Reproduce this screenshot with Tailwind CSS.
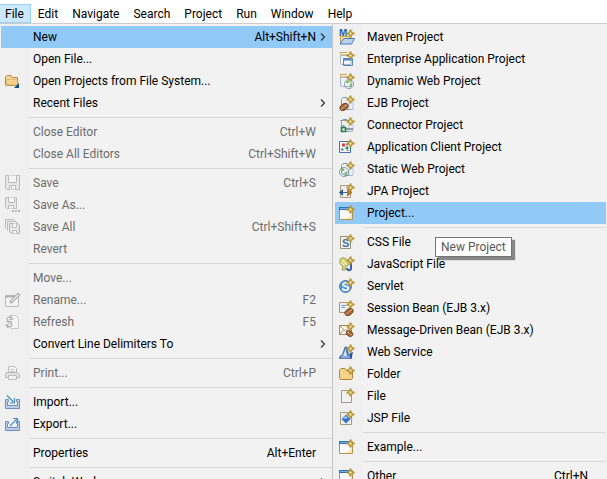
<!DOCTYPE html>
<html lang="en">

<head>
    <meta charset="UTF-8">
    <meta name="viewport" content="width=device-width, initial-scale=1.0">
    <title>File menu</title>
    <script src="https://cdn.jsdelivr.net/npm/@tailwindcss/browser@4"></script>
</head>

<body class="flex h-screen flex-col overflow-hidden bg-white font-[Roboto,'Noto_Sans',sans-serif] text-[12px] leading-4 text-black">

    <!-- icon set, all on a 16x16 grid -->
    <svg class="hidden">
        <defs>
            <linearGradient id="gold" x1="0" y1="0" x2="0" y2="1">
                <stop offset="0" stop-color="#fff3cf" />
                <stop offset="1" stop-color="#f3c566" />
            </linearGradient>
            <linearGradient id="page" x1="0" y1="0" x2="1" y2="1">
                <stop offset="0" stop-color="#ffffff" />
                <stop offset="1" stop-color="#cfe0f5" />
            </linearGradient>
            <linearGradient id="steel" x1="0" y1="0" x2="1" y2="1">
                <stop offset="0" stop-color="#c9dcf2" />
                <stop offset="1" stop-color="#7fa5d2" />
            </linearGradient>
            <radialGradient id="globe" cx=".35" cy=".3" r=".8">
                <stop offset="0" stop-color="#e8f6ff" />
                <stop offset=".5" stop-color="#5a9bd0" />
                <stop offset="1" stop-color="#1d4f8f" />
            </radialGradient>

            <symbol id="spark" viewBox="0 0 16 16">
                <path d="M11 1H12V3H13V4H15V5H13V6H12V8H11V6H10V5H8V4H10V3H11Z" fill="#fffbe0" stroke="#b8942f" stroke-width="1.200" />
            </symbol>
            <symbol id="bean" viewBox="0 0 16 16">
                <ellipse cx="5" cy="12" rx="4.6" ry="3.1" transform="rotate(-35 5 12)" fill="#a5673a" stroke="#6b3a1c" stroke-width=".8" />
                <path d="M1.8 14.2C4.5 13.5 4.5 11 8 9.8" fill="none" stroke="#e2b58c" />
            </symbol>
            <symbol id="ball" viewBox="0 0 16 16">
                <circle cx="5" cy="11" r="4.6" fill="url(#globe)" stroke="#4672a6" stroke-width=".6" />
                <path d="M1.5 9C3 6.5 5 7 5.5 8S4 10.500 3 10.500ZM5.500 11.500L8.500 10L8 13.500L5.500 14.800Z" fill="#7dbb6c" />
            </symbol>
            <symbol id="bluefolder" viewBox="0 0 16 16">
                <path d="M2.500 12.500V4.500L4 2.500H8L9 4.500H12.500V14.500H7L2.500 12.500Z" fill="url(#steel)" stroke="#7b98bd" />
                <path d="M10 6H14V14.500H10Z" fill="#eaf2fb" stroke="#8fa9c9" stroke-width=".6" />
            </symbol>

            <symbol id="i-open" viewBox="0 0 16 16">
                <path d="M.5 12V4L2 2.500H6L7.500 4.500H12.500V7L13 12.500H1.500Z" fill="#f3d28c" stroke="#b98a48" />
                <path d="M1.500 6.500H12.500V12H1.500Z" fill="url(#gold)" stroke="#d5a75c" stroke-width=".6" />
                <path d="M14 10V15H9Z" fill="#0b4f93" />
            </symbol>
            <symbol id="i-save" viewBox="0 0 16 16">
                <path d="M.5 .5H14.500V14.500H2L.5 13Z" fill="#e8e8e8" stroke="#bcbcbc" />
                <path d="M3.500 .5V7.500H11.500V.5M4.500 14.500V10.500H10.500V14.500M6.500 11.500V14" fill="#f4f4f4" stroke="#bcbcbc" />
            </symbol>
            <symbol id="i-saveas" viewBox="0 0 16 16">
                <path d="M.5 .5H11.500V11.500H2L.5 10Z" fill="#e8e8e8" stroke="#bcbcbc" />
                <path d="M3.500 .5V5.500H9.500V.5M3.500 11.500V8.500H8.500V11.500" fill="#f4f4f4" stroke="#bcbcbc" />
                <path d="M7 13H9V15H7ZM10 13H12V15H10ZM13 13H15V15H13Z" fill="#b4b4b4" />
            </symbol>
            <symbol id="i-saveall" viewBox="0 0 16 16">
                <path d="M.5 9.500V.5H8.500L10.500 2.500M2.500 11.500V2.500H10.500L12.500 4.500" fill="#ececec" stroke="#bcbcbc" />
                <path d="M4.500 4.500H12.500L14.500 6.500V14.500H6.500L4.500 12.500Z" fill="#e8e8e8" stroke="#b4b4b4" />
                <path d="M7.500 4.500V8.500H11.500V4.500M7.500 14.500V11.500H11.500V14.500" fill="#f4f4f4" stroke="#bcbcbc" />
            </symbol>
            <symbol id="i-rename" viewBox="0 0 16 16">
                <path d="M.5 3.500H13.500V14.500H.5Z" fill="#f3f3f3" stroke="#bcbcbc" />
                <path d="M.5 4.500H10" stroke="#b0b0b0" stroke-width="2" />
                <path d="M5 11L6 8L13 1L15 3L8 10Z" fill="#dcdcdc" stroke="#a4a4a4" />
            </symbol>
            <symbol id="i-refresh" viewBox="0 0 16 16">
                <path d="M5 1.500H10.500L13.500 4.500V14.500H6" fill="#f4f4f4" stroke="#c8c8c8" />
                <path d="M7 4.500C4 1.500 1 4 2.500 6.500S7 6.500 6.500 9M1 11C4 14.500 8 12.500 6.500 9.500S2.500 9 2 7M5 2L7.500 5L4 6M3 14L1 11L4.500 10" fill="none" stroke="#b0b0b0" stroke-width="1.200" />
            </symbol>
            <symbol id="i-print" viewBox="0 0 16 16">
                <path d="M3.500 8V1.500H9.500L11.500 3.500V8" fill="#f5f5f5" stroke="#bcbcbc" />
                <path d="M5 4.500H9M5 6.500H10" stroke="#c4c4c4" />
                <path d="M1.500 7.500H12.500L14.500 9.500V12.500H.5V9.500Z" fill="#e2e2e2" stroke="#b8b8b8" />
                <path d="M3.500 10.500H11.500V14.500H3.500Z" fill="#f0f0f0" stroke="#bcbcbc" />
            </symbol>
            <symbol id="i-import" viewBox="0 0 16 16">
                <path d="M3.500 5.500H.5V14.500H14.500V5.500H11.500V7.500H12.500V11.500H2.500V7.500H3.500Z" fill="#bccde8" stroke="#6f8fbe" />
                <path d="M2 1.500L8.500 8M9.500 4V9H4.500" fill="none" stroke="#4a90bf" stroke-width="1.200" />
            </symbol>
            <symbol id="i-export" viewBox="0 0 16 16">
                <path d="M3.500 5.500H.5V14.500H14.500V5.500H11.500V7.500H12.500V11.500H2.500V7.500H3.500Z" fill="#bccde8" stroke="#6f8fbe" />
                <path d="M5 10L12 3M8 2.500H12.500V7" fill="none" stroke="#4a90bf" stroke-width="1.200" />
            </symbol>

            <symbol id="i-maven" viewBox="0 0 16 16">
                <path d="M1.500 14V7.500H12V10" fill="#fbe7a6" stroke="#c9a24d" />
                <path d="M1 15L4.500 9.500H15.500L12.500 15Z" fill="#b9d5f3" stroke="#4776ba" />
                <text x="0" y="7" font-family="Liberation Sans" font-size="10" font-weight="bold" fill="#2a5c9c">M</text>
                <use href="#spark" />
            </symbol>
            <symbol id="i-ear" viewBox="0 0 16 16">
                <path d="M1.500 4.500H12V13.500H3Q1.500 13.500 1.500 12Z" fill="#f3f6fa" stroke="#a8b6c9" />
                <path d="M1.500 3.500V1.500H8" fill="none" stroke="#c9a24d" />
                <path d="M1 3.500H9" stroke="#e5c983" />
                <path d="M4.500 7.500H13.500V14.500H4.500Z" fill="url(#page)" stroke="#5d84b3" />
                <path d="M4 8.500H14" stroke="#4d86c6" stroke-width="2" />
                <use href="#spark" />
            </symbol>
            <symbol id="i-web" viewBox="0 0 16 16">
                <path d="M1.500 4.500H12V13.500H3Q1.500 13.500 1.500 12Z" fill="#f0f4fa" stroke="#a8b6c9" />
                <path d="M1.500 3.500V1.500H8" fill="none" stroke="#c9a24d" />
                <path d="M1 3.500H9" stroke="#e5c983" />
                <use href="#ball" x="5" />
                <use href="#spark" />
            </symbol>
            <symbol id="i-ejb" viewBox="0 0 16 16">
                <use href="#bluefolder" />
                <use href="#bean" />
                <use href="#spark" />
            </symbol>
            <symbol id="i-connector" viewBox="0 0 16 16">
                <use href="#bluefolder" />
                <path d="M1 3.500H8" stroke="#9a9a9a" />
                <path d="M4.500 8V12H14" fill="none" stroke="#8a98a8" stroke-width="2" />
                <path d="M2.500 10.500H6.500V14.500H2.500Z" fill="#d8f0dd" stroke="#2a8048" stroke-width="1.600" />
                <use href="#spark" />
            </symbol>
            <symbol id="i-client" viewBox="0 0 16 16">
                <path d="M.5 2.500H11.500V13.500H.5Z" fill="#f7fafd" stroke="#4573ad" />
                <path d="M3 4.500H6V7.500H3Z" fill="#d5413c" />
                <path d="M8 7L10 9L8 11L6 9Z" fill="#2f9a4a" />
                <path d="M2.500 9L5 10.500L2.500 12Z" fill="#2c62b0" />
                <path d="M7 5H9V6.500H7ZM8 11H10V12H8Z" fill="#b06bb5" />
                <use href="#spark" />
            </symbol>
            <symbol id="i-static" viewBox="0 0 16 16">
                <use href="#bluefolder" />
                <use href="#ball" />
                <use href="#spark" />
            </symbol>
            <symbol id="i-jpa" viewBox="0 0 16 16">
                <path d="M1.500 2.500H11.500V14.500H1.500Z" fill="url(#page)" stroke="#a99b7c" />
                <path d="M3 9.500H10" stroke="#3a6ea5" />
                <path d="M0 9.500L4 6V13Z" fill="#26558f" />
                <path d="M13 9.500L8.500 6V13Z" fill="#c47b2b" stroke="#8d5418" stroke-width=".6" />
                <use href="#spark" />
            </symbol>
            <symbol id="i-window" viewBox="0 0 16 16">
                <path d="M.5 2.500H13.500V14.500H.5Z" fill="#f8fbff" stroke="#b09355" />
                <path d="M13 7V14H5C9 13 11.500 11 13 7Z" fill="#fbe6ac" />
                <path d="M0 3.500H11" stroke="#2d73b5" stroke-width="3" />
                <path d="M1 3.500H11" stroke="#6fb4e8" />
                <use href="#spark" />
            </symbol>
            <symbol id="i-css" viewBox="0 0 16 16">
                <path d="M1.500 2.500H11.500V14.500H1.500Z" fill="url(#page)" stroke="#9a9378" />
                <text x="3" y="13" font-family="Liberation Sans" font-size="11" font-weight="bold" fill="#3f74b0">S</text>
                <use href="#spark" />
            </symbol>
            <symbol id="i-js" viewBox="0 0 16 16">
                <path d="M1 3Q4 0 7 3L10 5V9L7 10L6 14H3L4 10L1 8Z" fill="#d9d67c" stroke="#8f8f52" stroke-width=".8" />
                <path d="M3 4L8 9M2 7L5 9" stroke="#fbfad0" />
                <path d="M12 7V12.500Q12 14.300 10 14.300Q8 14.300 8 12" fill="none" stroke="#3b62a5" stroke-width="2" />
                <use href="#spark" />
            </symbol>
            <symbol id="i-servlet" viewBox="0 0 16 16">
                <circle cx="6.500" cy="8.500" r="6" fill="#5b97cf" stroke="#4a7fb5" />
                <text x="2.500" y="13" font-family="Liberation Sans" font-size="12" font-weight="bold" fill="#ffffff">S</text>
                <use href="#spark" />
            </symbol>
            <symbol id="i-session" viewBox="0 0 16 16">
                <path d="M.5 2.500H11.500V12.500H.5Z" fill="url(#page)" stroke="#a99b6c" />
                <path d="M2.500 5.500H7M2.500 7.500H6" stroke="#6a97cf" />
                <use href="#bean" x="5" />
                <use href="#spark" />
            </symbol>
            <symbol id="i-message" viewBox="0 0 16 16">
                <path d="M.5 3.500H12.500V12.500H.5Z" fill="#fffaf0" stroke="#a5875c" />
                <path d="M.5 3.500L6.500 9L12 4M.5 12.500L4.500 8" fill="none" stroke="#a5875c" />
                <ellipse cx="10.500" cy="11.500" rx="3.600" ry="2.600" transform="rotate(35 10.500 11.500)" fill="#a5673a" stroke="#6b3a1c" stroke-width=".8" />
                <path d="M8 10C10 10 10.500 13 13 13" fill="none" stroke="#e2b58c" />
                <use href="#spark" />
            </symbol>
            <symbol id="i-service" viewBox="0 0 16 16">
                <path d="M0 14.500L1.500 11.500H3L6 3H8L10 11.500H11.500L13 14.500Z" fill="#5580c4" stroke="#34589a" stroke-width=".6" />
                <path d="M4 12L6.500 5L8 12Z" fill="#d6e6f8" />
                <path d="M10 13L11 9L14 8L12.500 14.500Z" fill="#2e5594" />
                <path d="M2 13H11" stroke="#c2d6f2" />
                <use href="#spark" />
            </symbol>
            <symbol id="i-folder" viewBox="0 0 16 16">
                <path d="M.5 12V4L2 2.500H6L7.500 4.500H13.500V12L12.500 13.500H1.500Z" fill="#f3d28c" stroke="#b88534" />
                <path d="M1 6H13V12.500H1Z" fill="url(#gold)" />
                <use href="#spark" />
            </symbol>
            <symbol id="i-file" viewBox="0 0 16 16">
                <path d="M2.500 2.500H12.500V14.500H2.500Z" fill="url(#page)" stroke="#a39c84" />
                <use href="#spark" />
            </symbol>
            <symbol id="i-jsp" viewBox="0 0 16 16">
                <path d="M1.500 2.500H12.500V14.500H1.500Z" fill="url(#page)" stroke="#a39c84" />
                <path d="M7 4.500L11.500 9L7 13.500L2.500 9Z" fill="#2f70c8" />
                <path d="M7 5L9 8L7 9L3.500 9Z" fill="#86b8ee" />
                <use href="#spark" />
            </symbol>
            <symbol id="i-arrow" viewBox="0 0 6 8">
                <path d="M1 .5L4.500 4L1 7.500" fill="none" stroke="#333333" stroke-width="1.200" />
            </symbol>
        </defs>
    </svg>

    <nav class="flex shrink-0 border-b border-[#cccccc] pt-1">
        <button class="h-[19px] border border-l-0 border-[#99d1ff] bg-[#cce8ff] pr-1.5 pl-[5px]">File</button>
        <button class="h-[19px] px-[7px]">Edit</button>
        <button class="h-[19px] px-[7px]">Navigate</button>
        <button class="h-[19px] px-[7px]">Search</button>
        <button class="h-[19px] px-[7px]">Project</button>
        <button class="h-[19px] px-[7px]">Run</button>
        <button class="h-[19px] px-[7px]">Window</button>
        <button class="h-[19px] px-[7px]">Help</button>
    </nav>

    <main class="flex min-h-0 flex-1">
        <!-- File menu -->
        <div class="w-[332px] shrink-0 bg-[linear-gradient(to_right,#f0f0f0_29px,#f2f2f2_29px)] pt-0.5 pl-px">
            <button class="flex h-[22px] w-full items-center gap-3 bg-[#91c9f7] pr-1.5 pl-1"><span class="w-4"></span><span>New</span><span class="ml-auto -mr-2">Alt+Shift+N</span><svg class="h-2 w-1.5"><use href="#i-arrow" /></svg></button>
            <button class="flex h-[22px] w-full items-center gap-3 pr-4 pl-1"><span class="w-4"></span><span>Open File...</span></button>
            <button class="flex h-[22px] w-full items-center gap-3 pr-4 pl-1"><svg class="size-4"><use href="#i-open" /></svg><span>Open Projects from File System...</span></button>
            <button class="flex h-[22px] w-full items-center gap-3 pr-1.5 pl-1"><span class="w-4"></span><span>Recent Files</span><svg class="ml-auto h-2 w-1.5"><use href="#i-arrow" /></svg></button>
            <hr class="my-[3px] ml-7 border-[#d7d7d7]">
            <button class="flex h-[22px] w-full items-center gap-3 pr-4 pl-1 text-[#6d6d6d]"><span class="w-4"></span><span>Close Editor</span><span class="ml-auto">Ctrl+W</span></button>
            <button class="flex h-[22px] w-full items-center gap-3 pr-4 pl-1 text-[#6d6d6d]"><span class="w-4"></span><span>Close All Editors</span><span class="ml-auto">Ctrl+Shift+W</span></button>
            <hr class="my-[3px] ml-7 border-[#d7d7d7]">
            <button class="flex h-[22px] w-full items-center gap-3 pr-4 pl-1 text-[#6d6d6d]"><svg class="size-4"><use href="#i-save" /></svg><span>Save</span><span class="ml-auto">Ctrl+S</span></button>
            <button class="flex h-[22px] w-full items-center gap-3 pr-4 pl-1 text-[#6d6d6d]"><svg class="size-4"><use href="#i-saveas" /></svg><span>Save As...</span></button>
            <button class="flex h-[22px] w-full items-center gap-3 pr-4 pl-1 text-[#6d6d6d]"><svg class="size-4"><use href="#i-saveall" /></svg><span>Save All</span><span class="ml-auto">Ctrl+Shift+S</span></button>
            <button class="flex h-[22px] w-full items-center gap-3 pr-4 pl-1 text-[#6d6d6d]"><span class="w-4"></span><span>Revert</span></button>
            <hr class="my-[3px] ml-7 border-[#d7d7d7]">
            <button class="flex h-[22px] w-full items-center gap-3 pr-4 pl-1 text-[#6d6d6d]"><span class="w-4"></span><span>Move...</span></button>
            <button class="flex h-[22px] w-full items-center gap-3 pr-4 pl-1 text-[#6d6d6d]"><svg class="size-4"><use href="#i-rename" /></svg><span>Rename...</span><span class="ml-auto">F2</span></button>
            <button class="flex h-[22px] w-full items-center gap-3 pr-4 pl-1 text-[#6d6d6d]"><svg class="size-4"><use href="#i-refresh" /></svg><span>Refresh</span><span class="ml-auto">F5</span></button>
            <button class="flex h-[22px] w-full items-center gap-3 pr-1.5 pl-1"><span class="w-4"></span><span>Convert Line Delimiters To</span><svg class="ml-auto h-2 w-1.5"><use href="#i-arrow" /></svg></button>
            <hr class="my-[3px] ml-7 border-[#d7d7d7]">
            <button class="flex h-[22px] w-full items-center gap-3 pr-4 pl-1 text-[#6d6d6d]"><svg class="size-4"><use href="#i-print" /></svg><span>Print...</span><span class="ml-auto">Ctrl+P</span></button>
            <hr class="my-[3px] ml-7 border-[#d7d7d7]">
            <button class="flex h-[22px] w-full items-center gap-3 pr-4 pl-1"><svg class="size-4"><use href="#i-import" /></svg><span>Import...</span></button>
            <button class="flex h-[22px] w-full items-center gap-3 pr-4 pl-1"><svg class="size-4"><use href="#i-export" /></svg><span>Export...</span></button>
            <hr class="my-[3px] ml-7 border-[#d7d7d7]">
            <button class="flex h-[22px] w-full items-center gap-3 pr-4 pl-1"><span class="w-4"></span><span>Properties</span><span class="ml-auto">Alt+Enter</span></button>
            <hr class="my-[3px] ml-7 border-[#d7d7d7]">
            <button class="flex h-[22px] w-full items-center gap-3 pr-1.5 pl-1"><span class="w-4"></span><span>Switch Workspace</span><svg class="ml-auto h-2 w-1.5"><use href="#i-arrow" /></svg></button>
        </div>

        <!-- New submenu -->
        <div class="flex-1 border-l border-[#c4c4c4] bg-[linear-gradient(to_right,#f0f0f0_30px,#f2f2f2_30px)] pt-0.5 pr-px pl-0.5">
            <button class="flex h-[22px] w-full items-center gap-3 pl-1"><svg class="size-4"><use href="#i-maven" /></svg><span>Maven Project</span></button>
            <button class="flex h-[22px] w-full items-center gap-3 pl-1"><svg class="size-4"><use href="#i-ear" /></svg><span>Enterprise Application Project</span></button>
            <button class="flex h-[22px] w-full items-center gap-3 pl-1"><svg class="size-4"><use href="#i-web" /></svg><span>Dynamic Web Project</span></button>
            <button class="flex h-[22px] w-full items-center gap-3 pl-1"><svg class="size-4"><use href="#i-ejb" /></svg><span>EJB Project</span></button>
            <button class="flex h-[22px] w-full items-center gap-3 pl-1"><svg class="size-4"><use href="#i-connector" /></svg><span>Connector Project</span></button>
            <button class="flex h-[22px] w-full items-center gap-3 pl-1"><svg class="size-4"><use href="#i-client" /></svg><span>Application Client Project</span></button>
            <button class="flex h-[22px] w-full items-center gap-3 pl-1"><svg class="size-4"><use href="#i-static" /></svg><span>Static Web Project</span></button>
            <button class="flex h-[22px] w-full items-center gap-3 pl-1"><svg class="size-4"><use href="#i-jpa" /></svg><span>JPA Project</span></button>
            <div class="relative">
                <button class="flex h-[22px] w-full items-center gap-3 bg-[#91c9f7] pl-1" aria-describedby="tip"><svg class="size-4"><use href="#i-window" /></svg><span>Project...</span></button>
                <div id="tip" role="tooltip" class="absolute top-[35px] left-[100px] border border-[#767676] bg-white px-[5px] py-px whitespace-nowrap text-[#575757] shadow-[3px_3px_1px_#00000070]">New Project</div>
            </div>
            <hr class="my-[3px] ml-7 border-[#d7d7d7]">
            <button class="flex h-[22px] w-full items-center gap-3 pl-1"><svg class="size-4"><use href="#i-css" /></svg><span>CSS File</span></button>
            <button class="flex h-[22px] w-full items-center gap-3 pl-1"><svg class="size-4"><use href="#i-js" /></svg><span>JavaScript File</span></button>
            <button class="flex h-[22px] w-full items-center gap-3 pl-1"><svg class="size-4"><use href="#i-servlet" /></svg><span>Servlet</span></button>
            <button class="flex h-[22px] w-full items-center gap-3 pl-1"><svg class="size-4"><use href="#i-session" /></svg><span>Session Bean (EJB 3.x)</span></button>
            <button class="flex h-[22px] w-full items-center gap-3 pl-1"><svg class="size-4"><use href="#i-message" /></svg><span>Message-Driven Bean (EJB 3.x)</span></button>
            <button class="flex h-[22px] w-full items-center gap-3 pl-1"><svg class="size-4"><use href="#i-service" /></svg><span>Web Service</span></button>
            <button class="flex h-[22px] w-full items-center gap-3 pl-1"><svg class="size-4"><use href="#i-folder" /></svg><span>Folder</span></button>
            <button class="flex h-[22px] w-full items-center gap-3 pl-1"><svg class="size-4"><use href="#i-file" /></svg><span>File</span></button>
            <button class="flex h-[22px] w-full items-center gap-3 pl-1"><svg class="size-4"><use href="#i-jsp" /></svg><span>JSP File</span></button>
            <hr class="my-[3px] ml-7 border-[#d7d7d7]">
            <button class="flex h-[22px] w-full items-center gap-3 pl-1"><svg class="size-4"><use href="#i-window" /></svg><span>Example...</span></button>
            <hr class="my-[3px] ml-7 border-[#d7d7d7]">
            <button class="flex h-[22px] w-full items-center gap-3 pr-[18px] pl-1"><svg class="size-4"><use href="#i-window" /></svg><span>Other</span><span class="ml-auto">Ctrl+N</span></button>
        </div>
    </main>
</body>

</html>
